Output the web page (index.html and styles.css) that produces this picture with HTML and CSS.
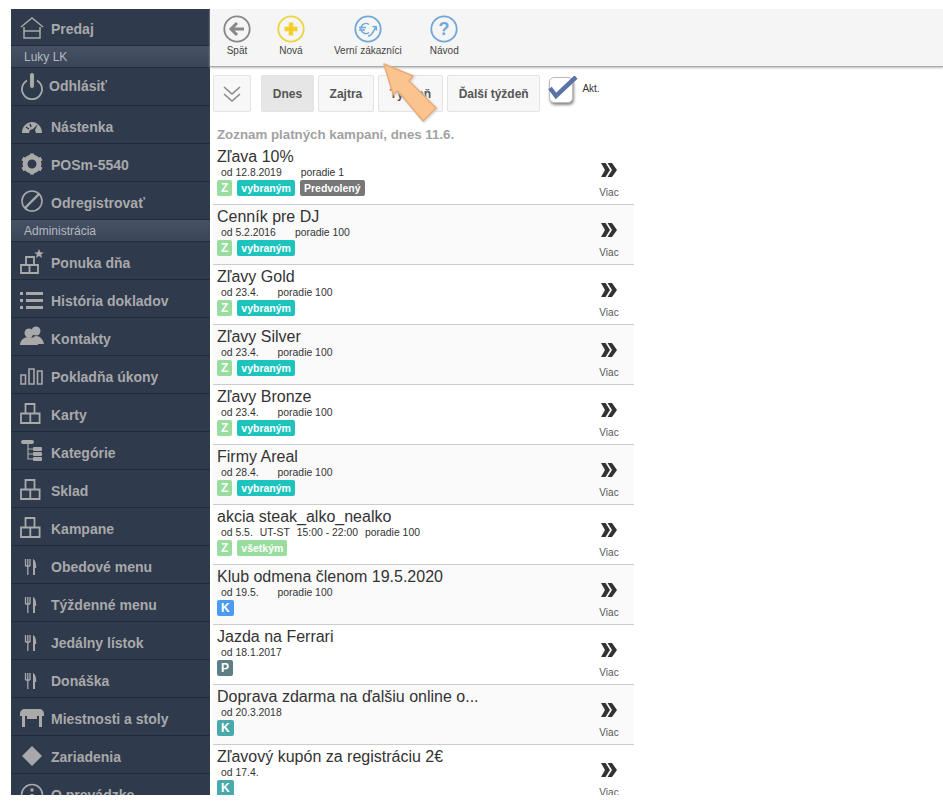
FILE: index.html
```html
<!DOCTYPE html>
<html lang="sk">
<head>
    <meta charset="UTF-8">
    <title>Kampane</title>
    <link rel="stylesheet" href="styles.css">
</head>
<body>
    <svg class="defs" width="0" height="0">
        <symbol id="i-boxes" viewBox="0 0 24 24">
            <path d="M5.500 1h9v9.500h-9zM1 10.500h9.300V20H1zM10.300 10.500h9.300V20h-9.300z" fill="none" stroke="currentColor" stroke-width="1.800"/>
        </symbol>
        <symbol id="i-fork" viewBox="0 0 24 24">
            <path d="M5.500 4v7M7.800 4v16M10 4v7M5.500 11H10" fill="none" stroke="currentColor" stroke-width="1.300"/>
            <path d="M13 4c2 1 3.200 3.500 3.200 9H15v7h-2z" fill="currentColor"/>
        </symbol>
        <symbol id="i-more" viewBox="0 0 16 16">
            <path d="M0 1h4.500L9 8l-4.500 7H0l4-7z" fill="#333"/>
            <path d="M6.500 1H11l5 7-5 7H6.500L11 8z" fill="#333"/>
        </symbol>
    </svg>

    <div class="app">
        <nav class="sidebar">
            <a class="nav-item">
                <svg class="nav-icon" viewBox="0 0 24 24"><path d="M1 10 12 1l11 9M4 10v11h16V10M4 14h16" fill="none" stroke="currentColor" stroke-width="1.500"/></svg>
                <span>Predaj</span>
            </a>
            <div class="nav-head">Luky LK</div>
            <a class="nav-item tight">
                <svg class="nav-icon" viewBox="0 0 24 24"><path d="M7 6.500a10 10 0 1 0 10 0" fill="none" stroke="currentColor" stroke-width="1.800"/><path d="M12 1v11" stroke="currentColor" stroke-width="4" stroke-linecap="round"/></svg>
                <span>Odhlásiť</span>
            </a>
            <a class="nav-item">
                <svg class="nav-icon" viewBox="0 0 24 24"><path d="M2 18C2 11 7 7 12 7s10 4 10 11h-6l-1-3 3-6-5 5-3 1-1 3z" fill="currentColor"/><path d="M6 12l3 2M10 9l1 3" stroke="#2f3a4d" stroke-width="1.500"/></svg>
                <span>Nástenka</span>
            </a>
            <a class="nav-item">
                <svg class="nav-icon" viewBox="0 0 24 24"><circle cx="12" cy="11" r="7" fill="none" stroke="currentColor" stroke-width="5"/><path d="M12 .5v4M12 17.500v4M2.500 5.500l3.500 2M18 14.500l3.500 2M2.500 16.500l3.500-2M18 7.500l3.500-2" stroke="currentColor" stroke-width="4"/></svg>
                <span>POSm-5540</span>
            </a>
            <a class="nav-item">
                <svg class="nav-icon" viewBox="0 0 24 24"><circle cx="12" cy="10" r="10" fill="none" stroke="currentColor" stroke-width="1.600"/><path d="M5 17 19 3" stroke="currentColor" stroke-width="2.400"/></svg>
                <span>Odregistrovať</span>
            </a>
            <div class="nav-head">Administrácia</div>
            <a class="nav-item">
                <svg class="nav-icon" viewBox="0 0 24 24"><path d="M6 6h8v8H6zM1 14h8.500v8H1zM9.500 14H18v8H9.500z" fill="none" stroke="currentColor" stroke-width="1.800"/><path d="M19 -2l1.300 3.200 3.400.2-2.600 2.200.9 3.300L19 5.100l-3 1.800.900-3.300-2.600-2.200 3.400-.2z" fill="currentColor"/></svg>
                <span>Ponuka dňa</span>
            </a>
            <a class="nav-item">
                <svg class="nav-icon" viewBox="0 0 24 24"><path d="M0 3h3v3H0zM0 10h3v3H0zM0 17h3v3H0zM6 3h17v3H6zM6 10h17v3H6zM6 17h17v3H6z" fill="currentColor"/></svg>
                <span>História dokladov</span>
            </a>
            <a class="nav-item">
                <svg class="nav-icon" viewBox="0 0 24 24"><circle cx="16" cy="4" r="4.500" fill="currentColor"/><path d="M16 9c4 0 7 3 8 8h-7l-4-7z" fill="currentColor"/><circle cx="9" cy="6" r="4.500" fill="currentColor"/><path d="M0 18c0-5 4-8 9-8s9 3 9 8z" fill="currentColor"/></svg>
                <span>Kontakty</span>
            </a>
            <a class="nav-item">
                <svg class="nav-icon" viewBox="0 0 24 24"><path d="M1 10h4.500v9H1zM9 4h5v15H9zM17.500 6H22v13h-4.500z" fill="none" stroke="currentColor" stroke-width="1.600"/></svg>
                <span>Pokladňa úkony</span>
            </a>
            <a class="nav-item"><svg class="nav-icon"><use href="#i-boxes"/></svg><span>Karty</span></a>
            <a class="nav-item">
                <svg class="nav-icon" viewBox="0 0 24 24"><rect x="1" y="-1" width="13" height="4" rx="2" fill="currentColor"/><path d="M8 3v15h5M8 8h5M8 13h5" fill="none" stroke="currentColor" stroke-width="1.200"/><rect x="13" y="6" width="9" height="4" rx="1" fill="currentColor"/><rect x="13" y="11" width="9" height="4" rx="1" fill="currentColor"/><rect x="13" y="16" width="9" height="4" rx="1" fill="currentColor"/></svg>
                <span>Kategórie</span>
            </a>
            <a class="nav-item"><svg class="nav-icon"><use href="#i-boxes"/></svg><span>Sklad</span></a>
            <a class="nav-item"><svg class="nav-icon"><use href="#i-boxes"/></svg><span>Kampane</span></a>
            <a class="nav-item"><svg class="nav-icon"><use href="#i-fork"/></svg><span>Obedové menu</span></a>
            <a class="nav-item"><svg class="nav-icon"><use href="#i-fork"/></svg><span>Týždenné menu</span></a>
            <a class="nav-item"><svg class="nav-icon"><use href="#i-fork"/></svg><span>Jedálny lístok</span></a>
            <a class="nav-item"><svg class="nav-icon"><use href="#i-fork"/></svg><span>Donáška</span></a>
            <a class="nav-item">
                <svg class="nav-icon" viewBox="0 0 24 24"><path d="M0 7c0-3 2-5 5-5h14c3 0 5 2 5 5v2h-2v11h-3V9H5v11H2V9H0zM7 9h10v3H7z" fill="currentColor"/></svg>
                <span>Miestnosti a stoly</span>
            </a>
            <a class="nav-item">
                <svg class="nav-icon" viewBox="0 0 24 24"><path d="M12 1l10 10-10 10L2 11z" fill="currentColor"/></svg>
                <span>Zariadenia</span>
            </a>
            <a class="nav-item">
                <svg class="nav-icon" viewBox="0 0 24 24"><circle cx="12" cy="12" r="10.500" fill="none" stroke="currentColor" stroke-width="1.600"/><path d="M12 5.500v3M12 11v8" stroke="currentColor" stroke-width="3"/></svg>
                <span>O prevádzke</span>
            </a>
        </nav>

        <main class="main">
            <div class="toolbar">
                <a class="tool tool-back">
                    <svg class="tool-icon" viewBox="0 0 28 28"><circle cx="14" cy="14" r="12.700" fill="none" stroke="#888" stroke-width="1.800"/><path d="M14 8l-6 6 6 6M8.500 14H21" fill="none" stroke="#888" stroke-width="3"/></svg>
                    <span>Spät</span>
                </a>
                <a class="tool tool-new">
                    <svg class="tool-icon" viewBox="0 0 28 28"><circle cx="14" cy="14" r="12.700" fill="none" stroke="#ecd43c" stroke-width="1.800"/><path d="M14 7.500v13M7.500 14h13" stroke="#f3cf2c" stroke-width="4.500"/></svg>
                    <span>Nová</span>
                </a>
                <a class="tool tool-loyal">
                    <svg class="tool-icon" viewBox="0 0 28 28"><circle cx="14" cy="14" r="12.700" fill="none" stroke="#6fa8d8" stroke-width="1.800"/><path d="M15 9.500C12 7 7 9 7 13.500s5 6.500 8 4M5 12.500h7M5 15h6" fill="none" stroke="#6fa8d8" stroke-width="1.300"/><path d="M14 21c3 0 4-2 5-4l3-5M18.500 11.500l3.700.3.300 3.700" fill="none" stroke="#6fa8d8" stroke-width="1.500"/></svg>
                    <span>Verní zákazníci</span>
                </a>
                <a class="tool tool-help">
                    <svg class="tool-icon" viewBox="0 0 28 28"><circle cx="14" cy="14" r="12.700" fill="none" stroke="#6fa8d8" stroke-width="1.800"/><text x="14" y="20" class="help-mark">?</text></svg>
                    <span>Návod</span>
                </a>
            </div>

            <div class="filters">
                <button class="btn btn-toggle">
                    <svg width="18" height="18" viewBox="0 0 18 18"><path d="M1 2l8 7 8-7M1 9l8 7 8-7" fill="none" stroke="#888" stroke-width="1.600"/></svg>
                </button>
                <div class="days">
                    <button class="btn btn-day active">Dnes</button>
                    <button class="btn btn-day">Zajtra</button>
                    <button class="btn btn-day">Týždeň</button>
                    <button class="btn btn-day">Ďalší týždeň</button>
                </div>
                <div class="check-box">
                    <svg class="check-mark" width="32" height="30" viewBox="0 0 32 30"><path d="M2 12l6 8L28 1" fill="none" stroke="#5b74a8" stroke-width="4.500"/></svg>
                </div>
                <span class="check-label">Akt.</span>
            </div>

            <h2 class="list-title">Zoznam platných kampaní, dnes 11.6.</h2>

            <div class="rows">
                <div class="row">
                    <div class="row-body">
                        <div class="row-name">Zľava 10%</div>
                        <div class="row-meta"><span>od 12.8.2019</span><span class="far">poradie 1</span></div>
                        <div class="tags"><span class="tag tag-z">Z</span><span class="tag tag-sel">vybraným</span><span class="tag tag-def">Predvolený</span></div>
                    </div>
                    <a class="row-more"><svg class="more-icon"><use href="#i-more"/></svg><span>Viac</span></a>
                </div>
                <div class="row">
                    <div class="row-body">
                        <div class="row-name">Cenník pre DJ</div>
                        <div class="row-meta"><span>od 5.2.2016</span><span class="far">poradie 100</span></div>
                        <div class="tags"><span class="tag tag-z">Z</span><span class="tag tag-sel">vybraným</span></div>
                    </div>
                    <a class="row-more"><svg class="more-icon"><use href="#i-more"/></svg><span>Viac</span></a>
                </div>
                <div class="row">
                    <div class="row-body">
                        <div class="row-name">Zľavy Gold</div>
                        <div class="row-meta"><span>od 23.4.</span><span class="far">poradie 100</span></div>
                        <div class="tags"><span class="tag tag-z">Z</span><span class="tag tag-sel">vybraným</span></div>
                    </div>
                    <a class="row-more"><svg class="more-icon"><use href="#i-more"/></svg><span>Viac</span></a>
                </div>
                <div class="row">
                    <div class="row-body">
                        <div class="row-name">Zľavy Silver</div>
                        <div class="row-meta"><span>od 23.4.</span><span class="far">poradie 100</span></div>
                        <div class="tags"><span class="tag tag-z">Z</span><span class="tag tag-sel">vybraným</span></div>
                    </div>
                    <a class="row-more"><svg class="more-icon"><use href="#i-more"/></svg><span>Viac</span></a>
                </div>
                <div class="row">
                    <div class="row-body">
                        <div class="row-name">Zľavy Bronze</div>
                        <div class="row-meta"><span>od 23.4.</span><span class="far">poradie 100</span></div>
                        <div class="tags"><span class="tag tag-z">Z</span><span class="tag tag-sel">vybraným</span></div>
                    </div>
                    <a class="row-more"><svg class="more-icon"><use href="#i-more"/></svg><span>Viac</span></a>
                </div>
                <div class="row">
                    <div class="row-body">
                        <div class="row-name">Firmy Areal</div>
                        <div class="row-meta"><span>od 28.4.</span><span class="far">poradie 100</span></div>
                        <div class="tags"><span class="tag tag-z">Z</span><span class="tag tag-sel">vybraným</span></div>
                    </div>
                    <a class="row-more"><svg class="more-icon"><use href="#i-more"/></svg><span>Viac</span></a>
                </div>
                <div class="row">
                    <div class="row-body">
                        <div class="row-name">akcia steak_alko_nealko</div>
                        <div class="row-meta"><span>od 5.5.</span><span class="near">UT-ST</span><span class="near">15:00 - 22:00</span><span class="near">poradie 100</span></div>
                        <div class="tags"><span class="tag tag-z">Z</span><span class="tag tag-all">všetkým</span></div>
                    </div>
                    <a class="row-more"><svg class="more-icon"><use href="#i-more"/></svg><span>Viac</span></a>
                </div>
                <div class="row">
                    <div class="row-body">
                        <div class="row-name">Klub odmena členom 19.5.2020</div>
                        <div class="row-meta"><span>od 19.5.</span><span class="far">poradie 100</span></div>
                        <div class="tags"><span class="tag tag-k">K</span></div>
                    </div>
                    <a class="row-more"><svg class="more-icon"><use href="#i-more"/></svg><span>Viac</span></a>
                </div>
                <div class="row">
                    <div class="row-body">
                        <div class="row-name">Jazda na Ferrari</div>
                        <div class="row-meta"><span>od 18.1.2017</span></div>
                        <div class="tags"><span class="tag tag-p">P</span></div>
                    </div>
                    <a class="row-more"><svg class="more-icon"><use href="#i-more"/></svg><span>Viac</span></a>
                </div>
                <div class="row">
                    <div class="row-body">
                        <div class="row-name">Doprava zdarma na ďalšiu online o...</div>
                        <div class="row-meta"><span>od 20.3.2018</span></div>
                        <div class="tags"><span class="tag tag-kt">K</span></div>
                    </div>
                    <a class="row-more"><svg class="more-icon"><use href="#i-more"/></svg><span>Viac</span></a>
                </div>
                <div class="row">
                    <div class="row-body">
                        <div class="row-name">Zľavový kupón za registráciu 2€</div>
                        <div class="row-meta"><span>od 17.4.</span></div>
                        <div class="tags"><span class="tag tag-kt">K</span></div>
                    </div>
                    <a class="row-more"><svg class="more-icon"><use href="#i-more"/></svg><span>Viac</span></a>
                </div>
            </div>
        </main>

        <svg class="pointer" width="64" height="68" viewBox="0 0 64 68">
            <path d="M4 3 33 15 29 20 56 47 43 60 18 30 13 33z" fill="#fbc48e" stroke="#e9ab78" stroke-width="1.500" stroke-linejoin="round"/>
        </svg>
    </div>
</body>
</html>
```

FILE: styles.css
```css
body {
    margin: 0;
    padding: 9px 0 0 11px;
    background-color: #fff;
    font-family: "Liberation Sans", Arial, sans-serif;
    color: #333;
}
.defs {
    position: absolute;
}
.app {
    position: relative;
    display: flex;
    height: 786px;
    overflow: hidden;
}
.sidebar {
    flex: 0 0 199px;
    background-color: #2f3a4d;
}
.nav-item {
    display: flex;
    align-items: center;
    gap: 7px;
    box-sizing: border-box;
    height: 38px;
    padding: 4px 0 0 9px;
    border-bottom: 1px solid #232b3a;
    color: #a9a9a9;
    font-size: 14px;
    font-weight: bold;
}
.nav-item:first-child {
    height: 37px;
}
.nav-item.tight {
    gap: 5px;
    padding-top: 0;
    padding-bottom: 2px;
}
.nav-icon {
    flex: 0 0 24px;
    width: 24px;
    height: 24px;
    overflow: visible;
}
.nav-head {
    box-sizing: border-box;
    height: 22px;
    padding: 4px 0 0 13px;
    border-bottom: 1px solid #232b3a;
    background: linear-gradient(#465164, #3a4558);
    color: #b5b9c0;
    font-size: 12px;
}
.main {
    flex: 1;
    min-width: 0;
}
.toolbar {
    display: flex;
    gap: 26px;
    box-sizing: border-box;
    height: 58px;
    padding: 6px 0 0 13px;
    background-color: #f5f5f5;
    border-bottom: 1px solid #aaa;
    box-shadow: 0 1px 2px #bbb;
}
.tool {
    display: flex;
    flex-direction: column;
    align-items: center;
    min-width: 28px;
    color: #444;
    font-size: 10px;
}
.tool span {
    margin-top: 2px;
}
.tool-loyal {
    margin: 0 2px 0 3px;
}
.tool-icon {
    width: 28px;
    height: 28px;
}
.help-mark {
    fill: #6fa8d8;
    font-size: 18px;
    font-weight: bold;
    text-anchor: middle;
}
.filters {
    display: flex;
    align-items: flex-start;
    box-sizing: border-box;
    height: 61px;
    padding: 8px 0 0 3px;
}
.btn {
    box-sizing: border-box;
    height: 37px;
    padding: 0;
    background-color: #f7f7f7;
    border: 1px solid #e3e3e3;
    border-radius: 2px;
    color: #555;
    font-family: inherit;
    font-size: 12px;
    font-weight: bold;
}
.btn-toggle {
    display: flex;
    align-items: center;
    justify-content: center;
    width: 38px;
    margin-right: 10px;
}
.days {
    display: flex;
    gap: 4px;
}
.btn-day {
    padding: 0 10.750px;
}
.btn-day.active {
    background-color: #e6e6e6;
}
.check-box {
    position: relative;
    box-sizing: border-box;
    width: 24px;
    height: 26px;
    margin: 2px 0 0 9px;
    background-color: #fff;
    border: 1px solid #bbb;
    border-radius: 5px;
    box-shadow: 1px 2px 3px #888;
}
.check-mark {
    position: absolute;
    left: -2px;
    top: -2px;
}
.check-label {
    margin: 8px 0 0 9px;
    font-size: 10px;
}
.list-title {
    margin: 0;
    padding-left: 7px;
    color: #a2a2a2;
    font-size: 13.300px;
    line-height: 14px;
}
.rows {
    width: 421px;
    margin: 3px 0 0 3px;
}
.row {
    display: flex;
    justify-content: space-between;
    box-sizing: border-box;
    height: 60px;
    padding-left: 4px;
    border-bottom: 1px solid #ccc;
}
.row:nth-child(even) {
    background-color: #fafafa;
}
.row-name {
    width: 270px;
    margin-top: 3px;
    font-size: 16px;
    line-height: 18px;
    white-space: nowrap;
}
.row-meta {
    display: flex;
    margin-top: 1px;
    padding-left: 4px;
    font-size: 10.400px;
    line-height: 12px;
    white-space: nowrap;
}
.far {
    margin-left: 19px;
}
.near {
    margin-left: 7px;
}
.tags {
    display: flex;
    gap: 5px;
    margin-top: 1px;
}
.tag {
    height: 16px;
    padding: 0 4px;
    border-radius: 2px;
    color: #fff;
    font-size: 10.500px;
    font-weight: bold;
    line-height: 16px;
}
.tag-z {
    background-color: #98dc9e;
    font-size: 12px;
}
.tag-k,
.tag-p,
.tag-kt {
    font-size: 12px;
}
.tag-sel {
    background-color: #1cc4bd;
}
.tag-def {
    background-color: #777;
}
.tag-all {
    background-color: #98dc9e;
}
.tag-k {
    background-color: #4d9bf0;
}
.tag-p {
    background-color: #5b7f85;
}
.tag-kt {
    background-color: #4aa9ab;
}
.row-more {
    display: flex;
    flex-direction: column;
    align-items: center;
    width: 30px;
    margin-right: 10px;
    padding-top: 17px;
    color: #555;
    font-size: 10px;
}
.more-icon {
    width: 16px;
    height: 16px;
    margin-bottom: 9px;
}
.pointer {
    position: absolute;
    left: 369px;
    top: 52px;
    filter: drop-shadow(1px 1px 1px #cfcfcf);
}
```
